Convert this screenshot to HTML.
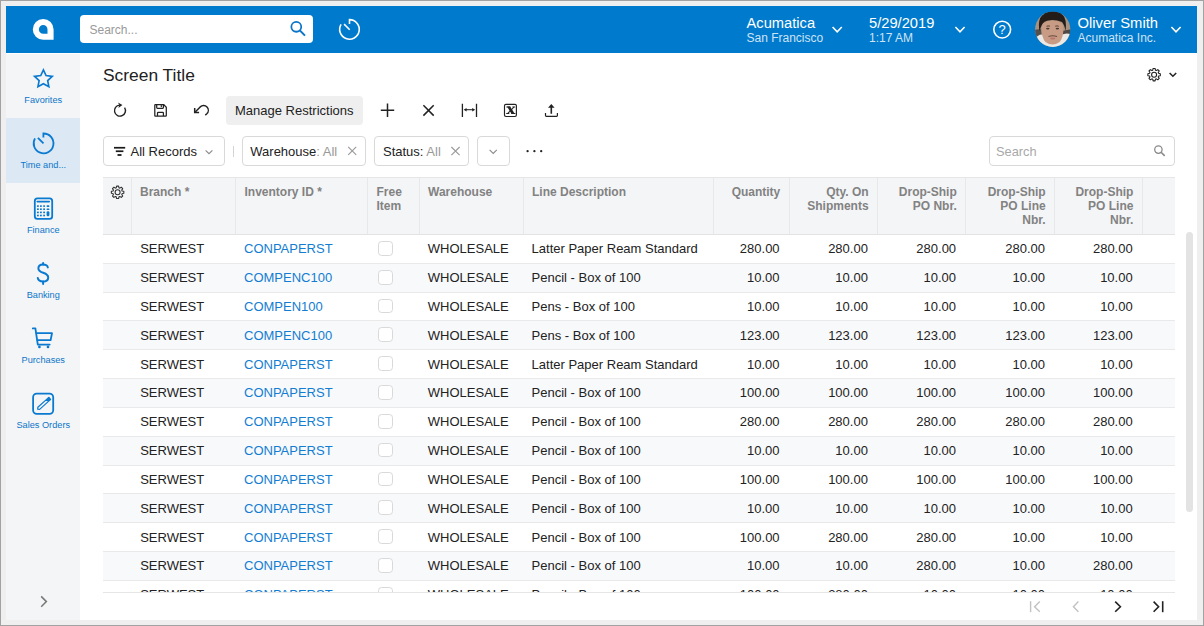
<!DOCTYPE html>
<html><head><meta charset="utf-8">
<style>
*{box-sizing:border-box;margin:0;padding:0}
html,body{width:1204px;height:626px;overflow:hidden;background:#efefef;font-family:"Liberation Sans",sans-serif;color:#222}
.a{position:absolute}
#frame{position:absolute;left:0;top:0;width:1204px;height:626px;border:1px solid #a2a2a2;border-bottom-width:1.5px}
#app{position:absolute;left:6px;top:6px;width:1191px;height:614px;background:#fff;overflow:hidden}
#top{position:absolute;left:6px;top:6px;width:1191px;height:46.7px;background:#007acc}
#side{position:absolute;left:6px;top:54px;width:74.2px;height:566px;background:#f4f5f7}
.nav{position:absolute;left:6px;width:74.5px;height:12px;line-height:11px;color:#0d76c8;font-size:9.2px;text-align:center}
.nav .lbl{position:absolute;left:0;width:74.5px;text-align:center;white-space:nowrap}
.wt{color:#fff;white-space:nowrap}
svg{position:absolute;overflow:visible}
.hd{position:absolute;font-size:12px;line-height:13.9px;font-weight:bold;color:#828282;white-space:nowrap}
.rw{position:absolute;left:0;width:1072px;height:28.83px;border-bottom:1px solid #e9e9e9}
.c{position:absolute;top:6.3px;font-size:13px;line-height:15px;color:#222;white-space:nowrap}
.c.r{width:90.6px;text-align:right}
.lk{color:#137dd2}
.cb{position:absolute;top:5.9px;width:14.9px;height:14.8px;border:1px solid #d9d9d9;border-radius:3.6px;background:#fff}

</style></head><body>
<div id="frame"></div>
<div id="app"></div>
<div id="top"></div>
<div id="side"></div>

<!-- header -->
<svg class="a" style="left:0;top:0" width="1204" height="60">
  <path fill="#fff" fill-rule="evenodd" d="M43.2,19 A10.4,10.4 0 0 0 32.8,29.4 A10.4,10.4 0 0 0 43.2,39.8 L53.6,39.8 L53.6,29.4 A10.4,10.4 0 0 0 43.2,19 Z M43.2,25.1 A4.3,4.3 0 0 0 38.9,29.4 A4.3,4.3 0 0 0 43.2,33.7 L47.5,33.7 L47.5,29.4 A4.3,4.3 0 0 0 43.2,25.1 Z"/>
</svg>

<div class="a" style="left:80.2px;top:15.3px;width:232.8px;height:27.9px;background:#fff;border-radius:4px"></div>
<div class="a" style="left:89.5px;top:22.8px;font-size:12px;color:#9a9a9a;line-height:14px">Search...</div>
<svg style="left:0;top:0" width="10" height="10">
  <circle cx="296.3" cy="26.8" r="4.95" fill="none" stroke="#0a74c7" stroke-width="1.75"/>
  <path d="M299.8,30.4 L305,35.6" stroke="#0a74c7" stroke-width="2" stroke-linecap="butt"/>
</svg>
<svg style="left:0;top:0" width="10" height="10">
  <path d="M349.5,24 V19.6 A9.8,9.8 0 1 1 341.1,24.3" fill="none" stroke="#fff" stroke-width="1.6"/>
  <path d="M344.1,24.1 L349.7,29.7" stroke="#fff" stroke-width="1.5"/>
</svg>
<div class="a wt" style="left:746.5px;top:15.2px;font-size:14.7px;line-height:17px">Acumatica</div>
<div class="a wt" style="left:746.5px;top:30.5px;font-size:12px;line-height:14px;color:#cfe3f5">San Francisco</div>
<div class="a wt" style="left:869px;top:15.2px;font-size:14.7px;line-height:17px">5/29/2019</div>
<div class="a wt" style="left:869px;top:30.5px;font-size:12px;line-height:14px;color:#cfe3f5">1:17 AM</div>
<div class="a wt" style="left:1077.5px;top:15.2px;font-size:14.8px;line-height:17px">Oliver Smith</div>
<div class="a wt" style="left:1077.5px;top:30.5px;font-size:12px;line-height:14px;color:#cfe3f5">Acumatica Inc.</div>
<svg style="left:0;top:0" width="10" height="10">
  <g fill="none" stroke="#fff" stroke-width="1.6">
    <path d="M832.6,27 L837.2,31.8 L841.8,27"/>
    <path d="M955.4,27 L960,31.8 L964.6,27"/>
    <path d="M1171.4,27 L1176,31.8 L1180.6,27"/>
    <circle cx="1002.2" cy="29.6" r="8.4"/>
  </g>
  <text x="1002.2" y="34.4" fill="#fff" font-family="Liberation Sans" font-size="13" text-anchor="middle">?</text>
</svg>
<svg style="left:0;top:0" width="10" height="10">
 <defs><clipPath id="avc"><circle cx="1052.7" cy="29.3" r="17.6"/></clipPath></defs>
 <g clip-path="url(#avc)">
  <rect x="1034" y="11" width="38" height="37" fill="#a8927f"/>
  <path d="M1034,30 L1041,29 L1042,38 L1034,40 Z" fill="#55504c"/>
  <path d="M1062,31 L1072,29 L1072,37 L1063,38 Z" fill="#4d4844"/>
  <path d="M1034,41 Q1038,33 1044,35 L1061,35 Q1067,32 1072,35 L1072,48 L1034,48 Z" fill="#ebe9e6"/>
  <path d="M1041.5,27 Q1041.5,38 1045.5,42 Q1052.5,47 1059.5,42 Q1063.5,38 1063.5,27 Q1063,21 1052.5,20.5 Q1042,21 1041.5,27 Z" fill="#c89b84"/>
  <path d="M1039.5,31 Q1037,17 1045,13.5 Q1052,10.5 1060,13 Q1067.5,16 1065.5,31 Q1064.5,25 1062,22 Q1056,19.5 1050,20.2 Q1043.5,21 1041.8,25 Q1040.5,28 1039.5,31 Z" fill="#241c18"/>
  <rect x="1034" y="9" width="38" height="5" fill="#241c18"/>
  <ellipse cx="1047.8" cy="28.6" rx="1.7" ry="0.9" fill="#4a3a33"/>
  <ellipse cx="1057.4" cy="28.6" rx="1.7" ry="0.9" fill="#4a3a33"/>
  <path d="M1046.5,26.3 Q1048,25.5 1050,26.2 M1055.2,26.2 Q1057.2,25.5 1058.8,26.3" stroke="#3a2c26" stroke-width="0.8" fill="none"/>
  <path d="M1048.5,36.5 Q1052.7,35 1057,36.5" stroke="#6a4a40" stroke-width="1.1" fill="none"/>
  <ellipse cx="1052.7" cy="38.5" rx="2.6" ry="1.1" fill="#b87470"/>
 </g>
</svg>


<div class="a" style="left:6px;top:118px;width:74.2px;height:65px;background:#dce9f5"></div>
<svg style="left:0;top:0" width="10" height="10">
 <g fill="none" stroke="#0a7ad0" stroke-width="1.8">
  <polygon stroke-linejoin="miter" stroke-width="1.65" points="43.40,69.90 46.05,75.56 52.24,76.33 47.68,80.59 48.87,86.72 43.40,83.70 37.93,86.72 39.12,80.59 34.56,76.33 40.75,75.56"/>
  <path d="M43.4,137.4 V133.5 A9.9,9.9 0 1 1 35,138.4"/>
  <path d="M37.9,137.9 L43.5,143.3"/>
  <rect x="34.8" y="198.3" width="17.4" height="20.5" rx="2.6"/>
  <path d="M37.2,201.6 H49.3" stroke-width="1.6" stroke-linecap="round"/>
 </g>
 <g fill="#0a7ad0">
  <rect x="37" y="205.3" width="1.8" height="1.6"/><rect x="40" y="205.3" width="1.8" height="1.6"/><rect x="43.2" y="205.3" width="1.8" height="1.6"/><rect x="46.6" y="205.3" width="2.8" height="1.6" rx=".6"/>
  <rect x="37" y="208.4" width="1.8" height="1.6"/><rect x="40" y="208.4" width="1.8" height="1.6"/><rect x="43.2" y="208.4" width="1.8" height="1.6"/><rect x="46.6" y="208.4" width="2.8" height="1.6" rx=".6"/>
  <rect x="37" y="211.6" width="1.8" height="1.6"/><rect x="40" y="211.6" width="1.8" height="1.6"/><rect x="43.2" y="211.6" width="1.8" height="1.6"/><rect x="46.6" y="211.3" width="2.8" height="5" rx="1.3"/>
  <rect x="37" y="214.7" width="1.8" height="1.6"/><rect x="40" y="214.7" width="1.8" height="1.6"/><rect x="43.2" y="214.7" width="1.8" height="1.6"/>
 </g>
 <g fill="none" stroke="#0a7ad0" stroke-width="1.8" stroke-linecap="round" stroke-linejoin="round">
  <path d="M47.8,267.4 C47.4,265.4 45.7,264.6 43,264.6 C40,264.6 38.4,266.1 38.4,268.4 C38.4,273.8 48.2,271.8 48.2,277.4 C48.2,280.2 46.2,281.5 43,281.5 C39.8,281.5 38.1,280.1 37.8,277.9" stroke-width="2"/>
  <path d="M43.1,262.9 V264.6" stroke-width="2"/><path d="M43.1,281.6 V284" stroke-width="2"/>
  <path d="M32.8,328.4 H35.4 L37.8,344.6 H49.7"/>
  <path d="M36.4,333.2 H52 L50.6,340.2 H37.4"/>
 </g>
 <g fill="#0a7ad0"><circle cx="39.4" cy="346.9" r="1.35"/><circle cx="48" cy="346.9" r="1.35"/></g>
 <g fill="none" stroke="#0a7ad0" stroke-width="1.8">
  <rect x="33.1" y="393.7" width="20.1" height="20.1" rx="3.6"/>
 </g>
 <g transform="translate(44.1,403.5) rotate(-42)">
  <path d="M-7.2,-1.35 H4.6 V1.35 H-7.2 L-8.6,0 Z" fill="none" stroke="#0a7ad0" stroke-width="1.2" stroke-linejoin="round"/>
  <rect x="4.6" y="-2" width="3.6" height="4" rx="0.8" fill="#0a7ad0"/>
 </g>
 <path d="M41.2,596.4 L46.4,601.6 L41.2,606.8" fill="none" stroke="#777" stroke-width="1.5"/>
</svg>
<div class="nav" style="top:95.2px"><div class="lbl">Favorites</div></div>
<div class="nav" style="top:159.5px"><div class="lbl">Time and...</div></div>
<div class="nav" style="top:224.7px"><div class="lbl">Finance</div></div>
<div class="nav" style="top:290px"><div class="lbl">Banking</div></div>
<div class="nav" style="top:354.8px"><div class="lbl">Purchases</div></div>
<div class="nav" style="top:420.3px"><div class="lbl">Sales Orders</div></div>


<div class="a" style="left:103px;top:64.7px;font-size:17.4px;line-height:20px;color:#222;white-space:nowrap">Screen Title</div>
<svg style="left:0;top:0" width="10" height="10">
 <g fill="none" stroke="#222" stroke-width="1.4">
  <path d="M1152.73,70.21 L1153.11,68.48 L1155.09,68.48 L1155.47,70.21 L1156.31,70.55 L1157.80,69.60 L1159.20,71.00 L1158.25,72.49 L1158.59,73.33 L1160.32,73.71 L1160.32,75.69 L1158.59,76.07 L1158.25,76.91 L1159.20,78.40 L1157.80,79.80 L1156.31,78.85 L1155.47,79.19 L1155.09,80.92 L1153.11,80.92 L1152.73,79.19 L1151.89,78.85 L1150.40,79.80 L1149.00,78.40 L1149.95,76.91 L1149.61,76.07 L1147.88,75.69 L1147.88,73.71 L1149.61,73.33 L1149.95,72.49 L1149.00,71.00 L1150.40,69.60 L1151.89,70.55 Z" stroke-width="1.1" stroke-linejoin="round"/><circle cx="1154.1" cy="74.7" r="2.5" stroke-width="1.1"/>
  <path d="M1169.6,73 L1172.9,76.3 L1176.2,73" stroke-width="1.5"/>
 </g>
</svg>
<div class="a" style="left:225.7px;top:95.7px;width:137.2px;height:29px;background:#efefef;border-radius:4px"></div>
<div class="a" style="left:235px;top:103px;font-size:13px;line-height:15px;color:#222;white-space:nowrap">Manage Restrictions</div>
<svg style="left:0;top:0" width="10" height="10">
 <g fill="none" stroke="#222" stroke-width="1.4">
  <path d="M124.6,107.6 A5.5,5.5 0 1 1 119.6,105.1"/>
  <path d="M154.8,105.3 Q154.8,104.7 155.4,104.7 H163.8 L166.3,107.2 V115.6 Q166.3,116.2 165.7,116.2 H155.4 Q154.8,116.2 154.8,115.6 Z" stroke-width="1.25"/>
  <path d="M156.7,104.8 V107.6 Q156.7,108.3 157.4,108.3 H162.7 Q163.4,108.3 163.4,107.6 V104.8" stroke-width="1.25"/>
  <path d="M157.5,116.1 V113 Q157.5,112.3 158.2,112.3 H162.7 Q163.4,112.3 163.4,113 V116.1" stroke-width="1.25"/>
  <path d="M194.7,108 V112.5 H199.1" stroke-width="1.5"/>
  <path d="M195.2,112.1 L200.2,106.9 C202.2,105 205.2,105.1 207,107 C208.8,109 208.7,112 206.8,113.8 L205.3,115.1" stroke-width="1.45"/>
  <path d="M387.5,103.6 V117 M380.8,110.3 H394.2" stroke-width="1.5"/>
  <path d="M423.4,105.3 L433.7,115.6 M433.7,105.3 L423.4,115.6" stroke-width="1.5"/>
  <path d="M462.4,103.7 V117 M476.5,103.7 V117" stroke-width="1.3"/>
  <path d="M465.5,109.7 H473.5" stroke-width="1.05"/>
  <rect x="504.5" y="104.4" width="11.9" height="12.1" rx="1.4" stroke-width="1.15"/>
  <path d="M545.5,112.9 V115.5 Q545.5,116.3 546.3,116.3 H556.6 Q557.4,116.3 557.4,115.5 V112.9" stroke-width="1.2"/>
 </g>
 <g fill="#222">
  <path d="M118,102.4 L122.4,105.1 L118.4,107.9 L119.3,105.1 Z"/>
  <rect x="160.7" y="105.1" width="1.2" height="2"/>
  <path d="M463.6,109.7 L466.6,107.9 V111.5 Z M475.2,109.7 L472.2,107.9 V111.5 Z"/>
  <path d="M551.3,103.9 L548,107.7 H550.5 V113.7 H552.1 V107.7 H554.6 Z"/>
 </g>
 <g fill="#222">
  <path d="M507,106.6 H510.2 L514.9,113.9 H511.7 Z"/>
  <path d="M506.4,106.6 H510.3 V107.5 H506.4 Z M512.4,106.6 H515.2 V107.4 H512.4 Z M506.2,113.1 H509.3 V113.9 H506.2 Z M511.2,113.1 H515.4 V113.9 H511.2 Z"/>
 </g>
 <path d="M514,107 L507.6,113.6" stroke="#222" stroke-width="1.05" fill="none"/>
</svg>


<div class="a" style="left:103px;top:136.2px;width:122.2px;height:29.6px;border:1px solid #d9d9d9;border-radius:4px"></div>
<div class="a" style="left:241.5px;top:136.2px;width:124.5px;height:29.6px;border:1px solid #d9d9d9;border-radius:4px"></div>
<div class="a" style="left:374px;top:136.2px;width:95px;height:29.6px;border:1px solid #d9d9d9;border-radius:4px"></div>
<div class="a" style="left:477px;top:136.2px;width:33px;height:29.6px;border:1px solid #d9d9d9;border-radius:4px"></div>
<div class="a" style="left:988.5px;top:136.2px;width:186.5px;height:29.6px;border:1px solid #d9d9d9;border-radius:4px"></div>
<div class="a" style="left:233.3px;top:146px;width:1px;height:11px;background:#d4d4d4"></div>
<div class="a" style="left:130.5px;top:144px;font-size:13px;line-height:15px;color:#222;white-space:nowrap">All Records</div>
<div class="a" style="left:250.3px;top:144px;font-size:13px;line-height:15px;color:#222;white-space:nowrap">Warehouse<span style="color:#999">: All</span></div>
<div class="a" style="left:383px;top:144px;font-size:13px;line-height:15px;color:#222;white-space:nowrap">Status:<span style="color:#999"> All</span></div>
<div class="a" style="left:996px;top:144.5px;font-size:12.8px;line-height:14px;color:#a8a8a8;white-space:nowrap">Search</div>
<svg style="left:0;top:0" width="10" height="10">
 <g fill="#1a1a1a"><rect x="114" y="146.9" width="11.2" height="1.7"/><rect x="115.8" y="150.4" width="7.6" height="1.7"/><rect x="117.5" y="154.1" width="4" height="1.8"/></g>
 <g fill="none" stroke="#8a8a8a" stroke-width="1.1">
  <path d="M205.6,150.3 L209,153.7 L212.4,150.3"/>
  <path d="M489.6,149.8 L493.2,153.4 L496.8,149.8"/>
 </g>
 <g fill="none" stroke="#9a9a9a" stroke-width="1.15">
  <path d="M348.2,146.9 L356.2,154.9 M356.2,146.9 L348.2,154.9"/>
  <path d="M451.4,147 L459.6,155.2 M459.6,147 L451.4,155.2"/>
 </g>
 <g fill="#222"><circle cx="527.6" cy="151.2" r="1.15"/><circle cx="534.4" cy="151.2" r="1.15"/><circle cx="541.2" cy="151.2" r="1.15"/></g>
 <g fill="none" stroke="#8a8a8a" stroke-width="1.3">
  <circle cx="1158.4" cy="149.6" r="3.7"/>
  <path d="M1161.1,152.3 L1164.7,155.9" stroke-width="1.6"/>
 </g>
</svg>

<div id="grid" class="a" style="left:103px;top:177px;width:1072px;height:415px;overflow:hidden">
<div class="a" style="left:0;top:0;width:1072px;height:58px;background:#f4f5f7;border-top:1px solid #e6e6e6;border-bottom:1px solid #e3e3e3"></div>
<div class="a" style="left:28.0px;top:1px;width:1px;height:56px;background:#e7e8e9"></div>
<div class="a" style="left:132px;top:1px;width:1px;height:56px;background:#e7e8e9"></div>
<div class="a" style="left:264px;top:1px;width:1px;height:56px;background:#e7e8e9"></div>
<div class="a" style="left:316.0px;top:1px;width:1px;height:56px;background:#e7e8e9"></div>
<div class="a" style="left:420.0px;top:1px;width:1px;height:56px;background:#e7e8e9"></div>
<div class="a" style="left:610.0px;top:1px;width:1px;height:56px;background:#e7e8e9"></div>
<div class="a" style="left:686.0px;top:1px;width:1px;height:56px;background:#e7e8e9"></div>
<div class="a" style="left:774.3px;top:1px;width:1px;height:56px;background:#e7e8e9"></div>
<div class="a" style="left:862px;top:1px;width:1px;height:56px;background:#e7e8e9"></div>
<div class="a" style="left:951.4px;top:1px;width:1px;height:56px;background:#e7e8e9"></div>
<div class="a" style="left:1039.1px;top:1px;width:1px;height:56px;background:#e7e8e9"></div>
<div class="hd" style="left:37.0px;top:8.9px">Branch *</div>
<div class="hd" style="left:141.5px;top:8.9px">Inventory ID *</div>
<div class="hd" style="left:273.5px;top:8.9px">Free<br>Item</div>
<div class="hd" style="left:325.0px;top:8.9px">Warehouse</div>
<div class="hd" style="left:429.0px;top:8.9px">Line Description</div>
<div class="hd" style="left:610.0px;width:67.3px;top:8.9px;text-align:right">Quantity</div>
<div class="hd" style="left:686.0px;width:79.6px;top:8.9px;text-align:right">Qty. On<br>Shipments</div>
<div class="hd" style="left:774.3px;width:79.5px;top:8.9px;text-align:right">Drop-Ship<br>PO Nbr.</div>
<div class="hd" style="left:862.5px;width:80.2px;top:8.9px;text-align:right">Drop-Ship<br>PO Line<br>Nbr.</div>
<div class="hd" style="left:951.4px;width:79.0px;top:8.9px;text-align:right">Drop-Ship<br>PO Line<br>Nbr.</div>
<div class="rw" style="top:58.00px;background:#fff">
<span class="c" style="left:37.2px">SERWEST</span>
<span class="c lk" style="left:141.0px">CONPAPERST</span>
<span class="cb" style="left:275.2px"></span>
<span class="c" style="left:324.8px">WHOLESALE</span>
<span class="c" style="left:428.6px">Latter Paper Ream Standard</span>
<span class="c r" style="left:586.0px">280.00</span>
<span class="c r" style="left:674.3px">280.00</span>
<span class="c r" style="left:762.5px">280.00</span>
<span class="c r" style="left:851.4px">280.00</span>
<span class="c r" style="left:939.1px">280.00</span>
</div>
<div class="rw" style="top:86.83px;background:#f8f9fb">
<span class="c" style="left:37.2px">SERWEST</span>
<span class="c lk" style="left:141.0px">COMPENC100</span>
<span class="cb" style="left:275.2px"></span>
<span class="c" style="left:324.8px">WHOLESALE</span>
<span class="c" style="left:428.6px">Pencil - Box of 100</span>
<span class="c r" style="left:586.0px">10.00</span>
<span class="c r" style="left:674.3px">10.00</span>
<span class="c r" style="left:762.5px">10.00</span>
<span class="c r" style="left:851.4px">10.00</span>
<span class="c r" style="left:939.1px">10.00</span>
</div>
<div class="rw" style="top:115.66px;background:#fff">
<span class="c" style="left:37.2px">SERWEST</span>
<span class="c lk" style="left:141.0px">COMPEN100</span>
<span class="cb" style="left:275.2px"></span>
<span class="c" style="left:324.8px">WHOLESALE</span>
<span class="c" style="left:428.6px">Pens - Box of 100</span>
<span class="c r" style="left:586.0px">10.00</span>
<span class="c r" style="left:674.3px">10.00</span>
<span class="c r" style="left:762.5px">10.00</span>
<span class="c r" style="left:851.4px">10.00</span>
<span class="c r" style="left:939.1px">10.00</span>
</div>
<div class="rw" style="top:144.49px;background:#f8f9fb">
<span class="c" style="left:37.2px">SERWEST</span>
<span class="c lk" style="left:141.0px">COMPENC100</span>
<span class="cb" style="left:275.2px"></span>
<span class="c" style="left:324.8px">WHOLESALE</span>
<span class="c" style="left:428.6px">Pens - Box of 100</span>
<span class="c r" style="left:586.0px">123.00</span>
<span class="c r" style="left:674.3px">123.00</span>
<span class="c r" style="left:762.5px">123.00</span>
<span class="c r" style="left:851.4px">123.00</span>
<span class="c r" style="left:939.1px">123.00</span>
</div>
<div class="rw" style="top:173.32px;background:#fff">
<span class="c" style="left:37.2px">SERWEST</span>
<span class="c lk" style="left:141.0px">CONPAPERST</span>
<span class="cb" style="left:275.2px"></span>
<span class="c" style="left:324.8px">WHOLESALE</span>
<span class="c" style="left:428.6px">Latter Paper Ream Standard</span>
<span class="c r" style="left:586.0px">10.00</span>
<span class="c r" style="left:674.3px">10.00</span>
<span class="c r" style="left:762.5px">10.00</span>
<span class="c r" style="left:851.4px">10.00</span>
<span class="c r" style="left:939.1px">10.00</span>
</div>
<div class="rw" style="top:202.15px;background:#f8f9fb">
<span class="c" style="left:37.2px">SERWEST</span>
<span class="c lk" style="left:141.0px">CONPAPERST</span>
<span class="cb" style="left:275.2px"></span>
<span class="c" style="left:324.8px">WHOLESALE</span>
<span class="c" style="left:428.6px">Pencil - Box of 100</span>
<span class="c r" style="left:586.0px">100.00</span>
<span class="c r" style="left:674.3px">100.00</span>
<span class="c r" style="left:762.5px">100.00</span>
<span class="c r" style="left:851.4px">100.00</span>
<span class="c r" style="left:939.1px">100.00</span>
</div>
<div class="rw" style="top:230.98px;background:#fff">
<span class="c" style="left:37.2px">SERWEST</span>
<span class="c lk" style="left:141.0px">CONPAPERST</span>
<span class="cb" style="left:275.2px"></span>
<span class="c" style="left:324.8px">WHOLESALE</span>
<span class="c" style="left:428.6px">Pencil - Box of 100</span>
<span class="c r" style="left:586.0px">280.00</span>
<span class="c r" style="left:674.3px">280.00</span>
<span class="c r" style="left:762.5px">280.00</span>
<span class="c r" style="left:851.4px">280.00</span>
<span class="c r" style="left:939.1px">280.00</span>
</div>
<div class="rw" style="top:259.81px;background:#f8f9fb">
<span class="c" style="left:37.2px">SERWEST</span>
<span class="c lk" style="left:141.0px">CONPAPERST</span>
<span class="cb" style="left:275.2px"></span>
<span class="c" style="left:324.8px">WHOLESALE</span>
<span class="c" style="left:428.6px">Pencil - Box of 100</span>
<span class="c r" style="left:586.0px">10.00</span>
<span class="c r" style="left:674.3px">10.00</span>
<span class="c r" style="left:762.5px">10.00</span>
<span class="c r" style="left:851.4px">10.00</span>
<span class="c r" style="left:939.1px">10.00</span>
</div>
<div class="rw" style="top:288.64px;background:#fff">
<span class="c" style="left:37.2px">SERWEST</span>
<span class="c lk" style="left:141.0px">CONPAPERST</span>
<span class="cb" style="left:275.2px"></span>
<span class="c" style="left:324.8px">WHOLESALE</span>
<span class="c" style="left:428.6px">Pencil - Box of 100</span>
<span class="c r" style="left:586.0px">100.00</span>
<span class="c r" style="left:674.3px">100.00</span>
<span class="c r" style="left:762.5px">100.00</span>
<span class="c r" style="left:851.4px">100.00</span>
<span class="c r" style="left:939.1px">100.00</span>
</div>
<div class="rw" style="top:317.47px;background:#f8f9fb">
<span class="c" style="left:37.2px">SERWEST</span>
<span class="c lk" style="left:141.0px">CONPAPERST</span>
<span class="cb" style="left:275.2px"></span>
<span class="c" style="left:324.8px">WHOLESALE</span>
<span class="c" style="left:428.6px">Pencil - Box of 100</span>
<span class="c r" style="left:586.0px">10.00</span>
<span class="c r" style="left:674.3px">10.00</span>
<span class="c r" style="left:762.5px">10.00</span>
<span class="c r" style="left:851.4px">10.00</span>
<span class="c r" style="left:939.1px">10.00</span>
</div>
<div class="rw" style="top:346.30px;background:#fff">
<span class="c" style="left:37.2px">SERWEST</span>
<span class="c lk" style="left:141.0px">CONPAPERST</span>
<span class="cb" style="left:275.2px"></span>
<span class="c" style="left:324.8px">WHOLESALE</span>
<span class="c" style="left:428.6px">Pencil - Box of 100</span>
<span class="c r" style="left:586.0px">100.00</span>
<span class="c r" style="left:674.3px">280.00</span>
<span class="c r" style="left:762.5px">280.00</span>
<span class="c r" style="left:851.4px">10.00</span>
<span class="c r" style="left:939.1px">10.00</span>
</div>
<div class="rw" style="top:375.13px;background:#f8f9fb">
<span class="c" style="left:37.2px">SERWEST</span>
<span class="c lk" style="left:141.0px">CONPAPERST</span>
<span class="cb" style="left:275.2px"></span>
<span class="c" style="left:324.8px">WHOLESALE</span>
<span class="c" style="left:428.6px">Pencil - Box of 100</span>
<span class="c r" style="left:586.0px">10.00</span>
<span class="c r" style="left:674.3px">10.00</span>
<span class="c r" style="left:762.5px">280.00</span>
<span class="c r" style="left:851.4px">10.00</span>
<span class="c r" style="left:939.1px">280.00</span>
</div>
<div class="rw" style="top:403.96px;background:#fff">
<span class="c" style="left:37.2px">SERWEST</span>
<span class="c lk" style="left:141.0px">CONPAPERST</span>
<span class="cb" style="left:275.2px"></span>
<span class="c" style="left:324.8px">WHOLESALE</span>
<span class="c" style="left:428.6px">Pencil - Box of 100</span>
<span class="c r" style="left:586.0px">100.00</span>
<span class="c r" style="left:674.3px">280.00</span>
<span class="c r" style="left:762.5px">10.00</span>
<span class="c r" style="left:851.4px">10.00</span>
<span class="c r" style="left:939.1px">10.00</span>
</div>
</div>

<svg style="left:0;top:0" width="10" height="10">
 <g fill="none" stroke="#333" stroke-width="1.1" stroke-linejoin="round">
  <path d="M116.23,187.81 L116.61,186.08 L118.59,186.08 L118.97,187.81 L119.81,188.15 L121.30,187.20 L122.70,188.60 L121.75,190.09 L122.09,190.93 L123.82,191.31 L123.82,193.29 L122.09,193.67 L121.75,194.51 L122.70,196.00 L121.30,197.40 L119.81,196.45 L118.97,196.79 L118.59,198.52 L116.61,198.52 L116.23,196.79 L115.39,196.45 L113.90,197.40 L112.50,196.00 L113.45,194.51 L113.11,193.67 L111.38,193.29 L111.38,191.31 L113.11,190.93 L113.45,190.09 L112.50,188.60 L113.90,187.20 L115.39,188.15 Z"/><circle cx="117.6" cy="192.3" r="2.5"/>
 </g>
 <g fill="none" stroke="#c2c2c2" stroke-width="1.4">
  <path d="M1030.6,601.2 V612.2"/>
  <path d="M1039.8,601.6 L1034.6,606.7 L1039.8,611.8"/>
  <path d="M1078.4,601.6 L1073.4,606.7 L1078.4,611.8"/>
 </g>
 <g fill="none" stroke="#222" stroke-width="1.6">
  <path d="M1115.2,601.6 L1120.4,606.7 L1115.2,611.8"/>
  <path d="M1153.6,601.6 L1158.6,606.7 L1153.6,611.8"/>
  <path d="M1162.7,601.2 V612.2"/>
 </g>
</svg>
<div class="a" style="left:1186.4px;top:232px;width:7px;height:280px;border-radius:3.5px;background:#e3e3e3"></div>
<div class="a" style="left:103px;top:592px;width:1072px;height:1px;background:#e6e6e6"></div>

</body></html>
